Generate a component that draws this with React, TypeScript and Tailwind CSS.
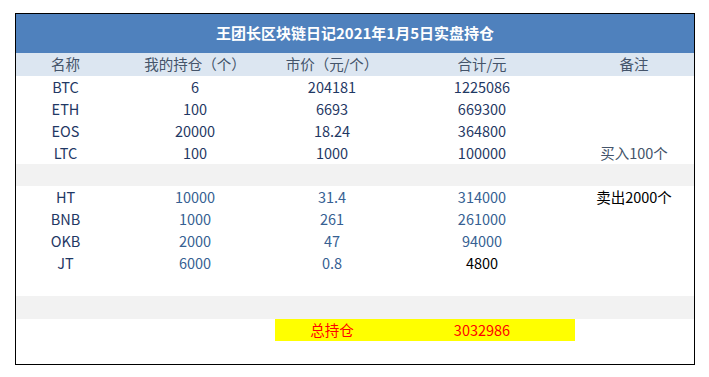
const COLS = ['w-[99px]', 'w-[160px]', 'w-[114px]', 'w-[186px]', 'w-[118px]'];

type Row = { name: string; qty: string; price: string; total: string; note?: string };

const TOP: Row[] = [
  { name: 'BTC', qty: '6', price: '204181', total: '1225086' },
  { name: 'ETH', qty: '100', price: '6693', total: '669300' },
  { name: 'EOS', qty: '20000', price: '18.24', total: '364800' },
  { name: 'LTC', qty: '100', price: '1000', total: '100000', note: '买入100个' },
];

const BOTTOM: Row[] = [
  { name: 'HT', qty: '10000', price: '31.4', total: '314000', note: '卖出2000个' },
  { name: 'BNB', qty: '1000', price: '261', total: '261000' },
  { name: 'OKB', qty: '2000', price: '47', total: '94000' },
  { name: 'JT', qty: '6000', price: '0.8', total: '4800' },
];

function DataRow({ row, blue }: { row: Row; blue?: boolean }) {
  const val = blue ? 'text-[#366092]' : 'text-[#1f3864]';
  const totalColor = row.name === 'JT' ? 'text-black' : val;
  const noteColor = blue ? 'text-black' : 'text-[#44546a]';
  return (
    <div className="flex h-[22px] items-center leading-none">
      <div className={`${COLS[0]} text-center text-[#1f3864]`}>{row.name}</div>
      <div className={`${COLS[1]} text-center ${val}`}>{row.qty}</div>
      <div className={`${COLS[2]} text-center ${val}`}>{row.price}</div>
      <div className={`${COLS[3]} text-center ${totalColor}`}>{row.total}</div>
      <div className={`${COLS[4]} text-center ${noteColor}`}>{row.note}</div>
    </div>
  );
}

export default function App() {
  return (
    <div className="h-[377px] w-[709px] bg-white pl-[15px] pt-[13px] font-['Microsoft_YaHei','Noto_Sans_CJK_SC',sans-serif] text-[14.5px]">
      <div className="flex h-[352px] w-[680px] flex-col border border-black">
        <div className="flex h-[39px] items-center justify-center bg-[#4f81bd] pb-[1px] text-[15px] font-bold text-white">
          王团长区块链日记2021年1月5日实盘持仓
        </div>
        <div className="flex h-[23px] items-center bg-[#dce6f1] leading-none text-[#44546a]">
          <div className={`${COLS[0]} text-center`}>名称</div>
          <div className={`${COLS[1]} text-center`}>我的持仓（个）</div>
          <div className={`${COLS[2]} text-center`}>市价（元/个）</div>
          <div className={`${COLS[3]} text-center`}>合计/元</div>
          <div className={`${COLS[4]} text-center`}>备注</div>
        </div>
        {TOP.map((r) => (
          <DataRow key={r.name} row={r} />
        ))}
        <div className="h-[22px] bg-[#f2f2f2]" />
        {BOTTOM.map((r) => (
          <DataRow key={r.name} row={r} blue />
        ))}
        <div className="h-[22px]" />
        <div className="h-[23px] bg-[#f2f2f2]" />
        <div className="flex h-[22px] items-center leading-none">
          <div className="w-[259px]" />
          <div className="flex h-full w-[300px] items-center bg-[#ffff00] text-[#ff0000]">
            <div className={`${COLS[2]} text-center`}>总持仓</div>
            <div className={`${COLS[3]} text-center`}>3032986</div>
          </div>
        </div>
      </div>
    </div>
  );
}
